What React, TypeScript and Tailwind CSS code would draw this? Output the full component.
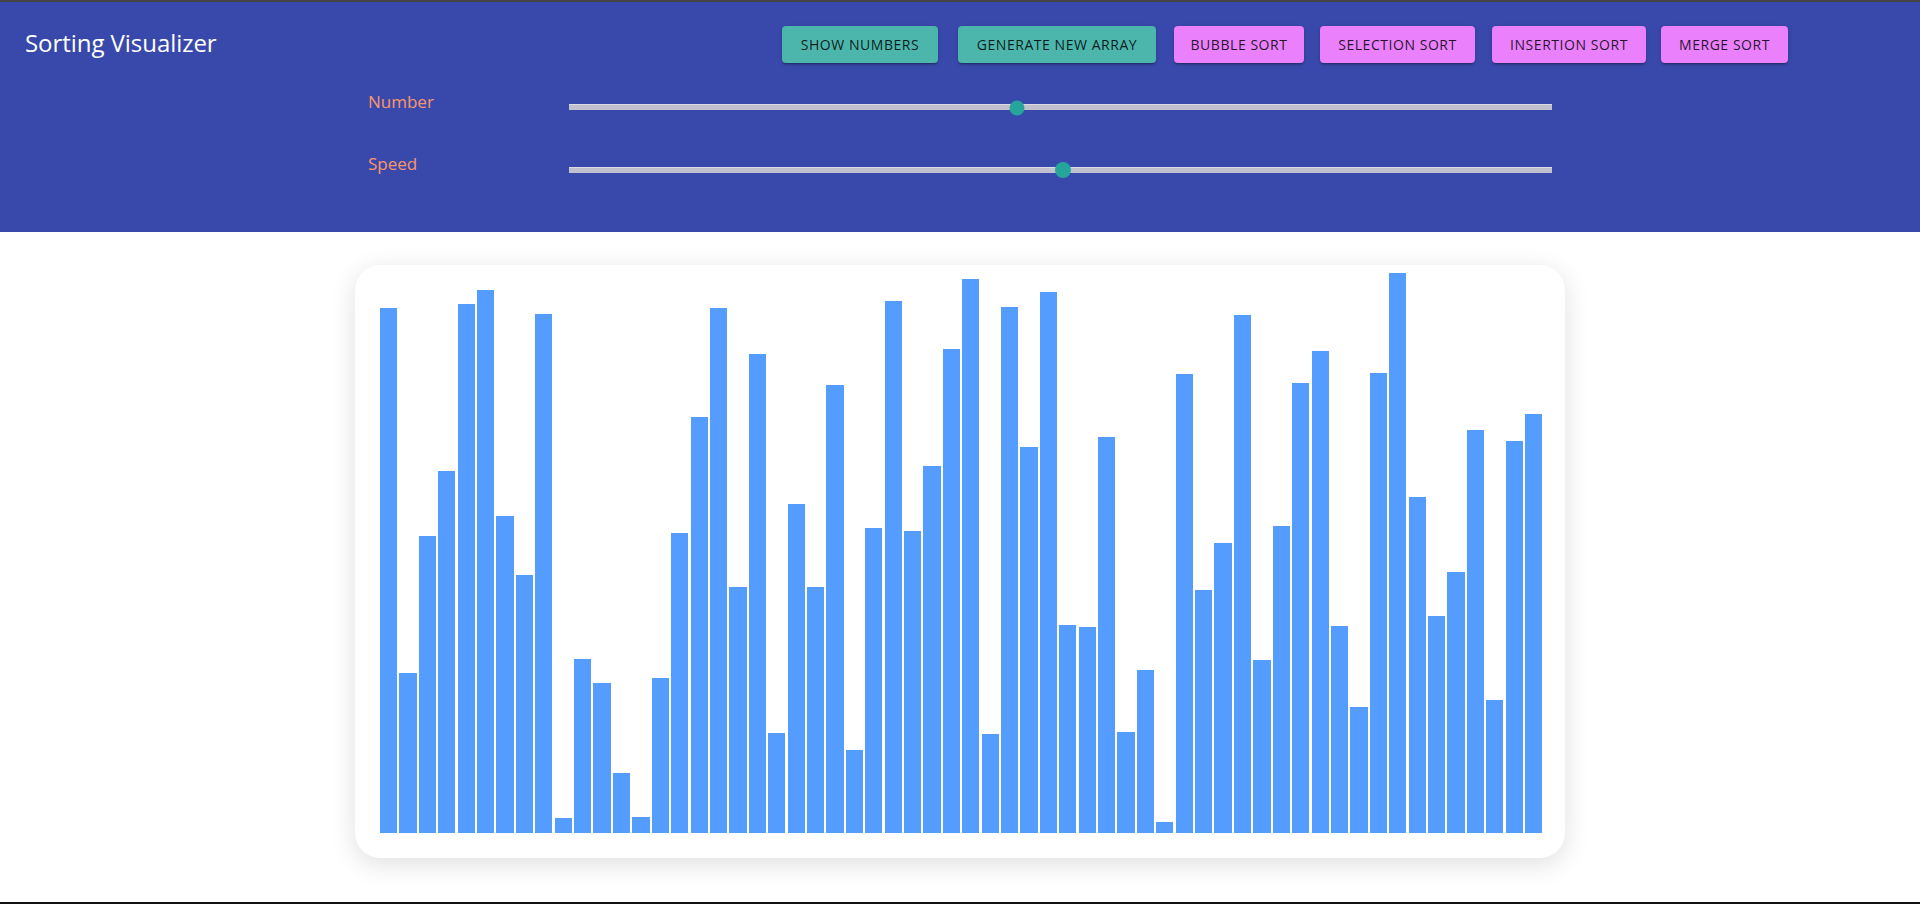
const heights = [
  525, 159.5, 297, 361.5, 529, 542.5, 317, 258, 519, 14.5, 174, 150, 60, 15.5, 154.5,
  299.5, 416, 525, 245.5, 478.5, 99.5, 328.5, 245.5, 447.5, 82.5, 304.5, 531.5, 301.5, 367, 484,
  553.5, 99, 526, 385.5, 540.5, 207.5, 205.5, 396, 101, 163, 10.5, 458.5, 243, 289.5, 517.5,
  172.5, 306.5, 450, 482, 207, 126, 459.5, 559.5, 335.5, 216.5, 261, 403, 132.5, 391.5, 418.5,
];

function ActionButton({ label, tone, className }: { label: string; tone: "teal" | "pink"; className: string }) {
  return (
    <button
      className={`h-[37px] rounded-[4px] text-[14px] leading-none tracking-[0.55px] uppercase text-black/85 shadow-[0_3px_1px_-2px_rgba(0,0,0,0.2),0_2px_2px_0_rgba(0,0,0,0.14),0_1px_5px_0_rgba(0,0,0,0.12)] ${
        tone === "teal" ? "bg-[#4db6ac]" : "bg-[#ea80fc]"
      } ${className}`}
    >
      {label}
    </button>
  );
}

function SliderRow({ label, value, labelClass, thumbClass, className }: { label: string; value: number; labelClass: string; thumbClass: string; className: string }) {
  return (
    <div className={`flex items-center ${className}`}>
      <div className={`w-[201px] text-[17px] leading-none text-[#f9956a] ${labelClass}`}>{label}</div>
      <div className="relative h-[6px] w-[983px] bg-[#c0c0ce] border-t border-t-[#dcdce4]">
        <div
          className={`absolute top-1/2 -translate-x-1/2 -translate-y-1/2 rounded-full bg-[#26a69a] ${thumbClass}`}
          style={{ left: `${value}%` }}
        />
      </div>
    </div>
  );
}

export default function App() {
  return (
    <div className="flex h-[904px] flex-col overflow-hidden border-t-2 border-b-2 border-t-[#444] border-b-[#111] bg-white font-['Open_Sans','Noto_Sans',sans-serif]">
      <header className="h-[230px] shrink-0 bg-[#3949ab] pl-[25px]">
        <div className="flex h-[37px] mt-[24px] items-center">
          <h1 className="w-[757px] -mt-[4px] text-[24px] leading-none tracking-[-0.05px] text-white">Sorting Visualizer</h1>
          <ActionButton label="Show numbers" tone="teal" className="w-[156px]" />
          <ActionButton label="Generate new array" tone="teal" className="ml-[20px] w-[198px]" />
          <ActionButton label="Bubble sort" tone="pink" className="ml-[18px] w-[130px]" />
          <ActionButton label="Selection sort" tone="pink" className="ml-[16px] w-[155px]" />
          <ActionButton label="Insertion sort" tone="pink" className="ml-[17px] w-[154px]" />
          <ActionButton label="Merge sort" tone="pink" className="ml-[15px] w-[127px]" />
        </div>
        <div className="ml-[343px] flex flex-col">
          <SliderRow label="Number" value={45.6} labelClass="-mt-[11px]" thumbClass="h-[15px] w-[15px]" className="mt-[41px]" />
          <SliderRow label="Speed" value={50.3} labelClass="-mt-[14px]" thumbClass="h-[16px] w-[16px] -mt-[1px]" className="mt-[57px]" />
        </div>
      </header>
      <main className="flex flex-1 justify-center">
        <div className="mt-[33px] flex h-[593px] w-[1210px] items-end rounded-[25px] bg-white pl-[25px] pr-[23px] pb-[25.5px] shadow-[0_6px_26px_rgba(0,0,0,0.13)]">
          <div className="flex w-[1162px] items-end gap-[2.2px]">
            {heights.map((h, i) => (
              <div key={i} className="flex-1 bg-[#549dff]" style={{ height: h }} />
            ))}
          </div>
        </div>
      </main>
    </div>
  );
}
